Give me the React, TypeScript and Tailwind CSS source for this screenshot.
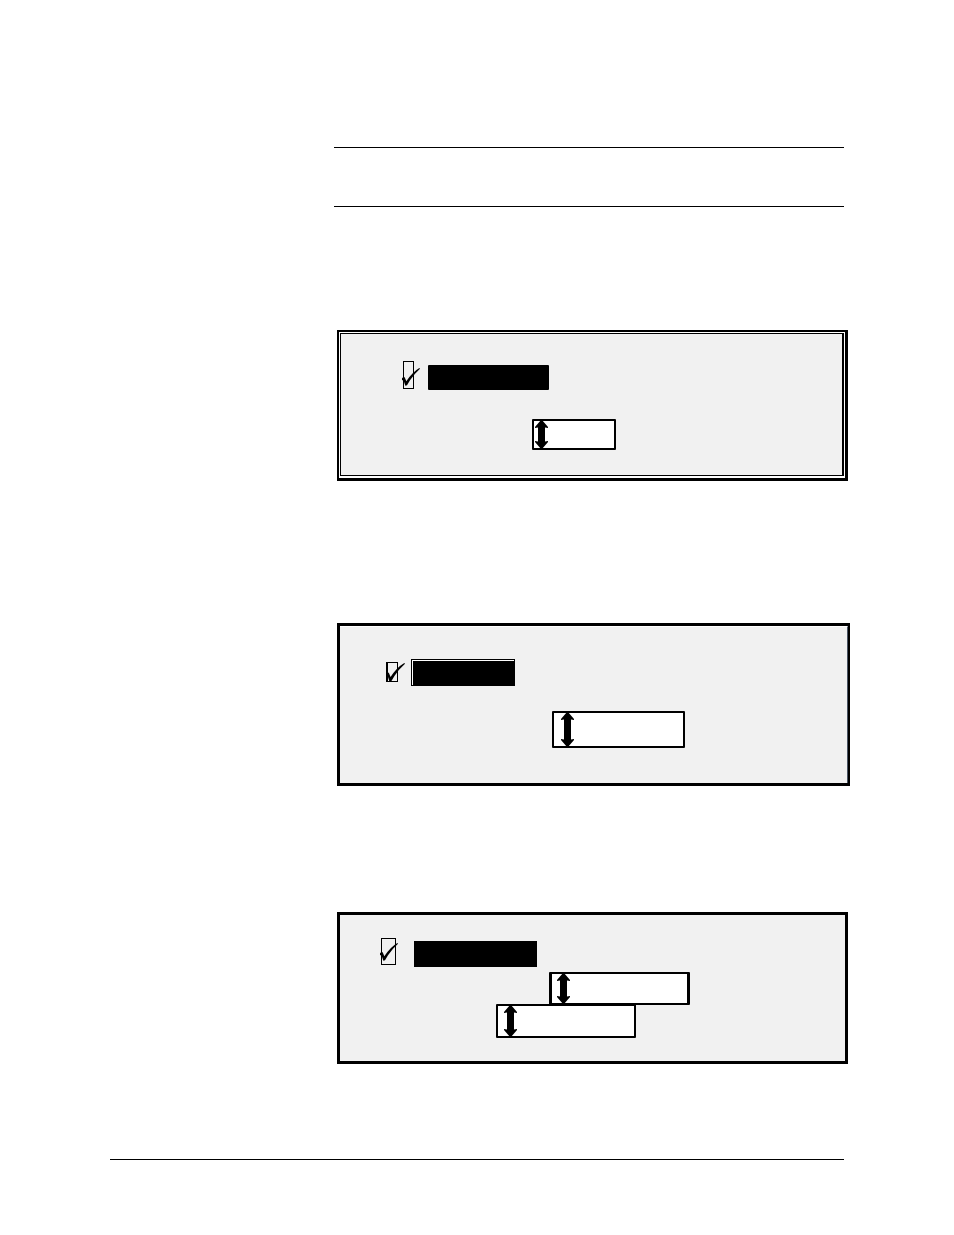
import React, { useState } from "react";
import clsx from "clsx";

type CheckProps = {
  label: string;
  className: string;
  markClassName: string;
};

function Check({ label, className, markClassName }: CheckProps) {
  const [checked, setChecked] = useState(true);

  return (
    <div className={clsx("relative shrink-0", className)}>
      <input
        type="checkbox"
        aria-label={label}
        checked={checked}
        onChange={(e) => setChecked(e.target.checked)}
        className="block h-full w-full appearance-none"
      />
      {checked && (
        // The tick is wider than its box
        <svg
          viewBox="0 0 54 54"
          aria-hidden="true"
          className={clsx("pointer-events-none absolute", markClassName)}
        >
          <path d="M0 31 L4 27 L8 28 L13 40 Q30 13 52 0 L54 2 Q36 18 24 37 L15 52 L10 53 L5 38 L0 36 Z" />
        </svg>
      )}
    </div>
  );
}

type SpinnerProps = {
  label: string;
  height: number;
  className: string;
};

function Spinner({ label, height, className }: SpinnerProps) {
  const [value, setValue] = useState("");

  return (
    <div className={clsx("flex items-center border-black bg-white", className)}>
      <svg
        viewBox={`0 0 13 ${height}`}
        width={13}
        height={height}
        aria-hidden="true"
        className="-my-px shrink-0"
      >
        <path
          d={`M6 0 H7 L13 7 V8 L10 7.5 V${height - 7.5} L13 ${height - 8} V${height - 7} L7 ${height} H6 L0 ${height - 7} V${height - 8} L3 ${height - 7.5} V7.5 L0 8 V7 Z`}
        />
      </svg>
      <input
        type="text"
        aria-label={label}
        value={value}
        onChange={(e) => setValue(e.target.value)}
        className="h-full min-w-0 flex-1 bg-transparent px-2 text-sm outline-none"
      />
    </div>
  );
}

export default function App() {
  return (
    <div className="min-h-screen bg-white px-[110px] pt-[147px] pb-[75px] font-['Liberation_Sans',sans-serif] text-black">
      <main className="ml-[224px]">
        <header className="h-[60px] border-y border-black" />

        <section className="mt-[123px] ml-[3px] -mr-1 border-2 border-r-3 border-b-3 border-black bg-white p-px pb-0.5">
          <div className="border border-r-2 border-black bg-[#f1f1f1] pt-[27px] pb-[25px]">
            <div className="flex items-start gap-3.5 pl-[62px]">
              <Check
                label="First option"
                className="h-7 w-[11px] border border-black"
                markClassName="top-1.5 -left-0.5 h-[18px] w-[18px]"
              />
              <button
                type="button"
                aria-label="First option"
                className="mt-1 h-[25px] w-[121px] rounded-[1px] bg-black"
              />
            </div>
            <Spinner
              label="First value"
              height={29}
              className="mt-[29px] ml-[191px] h-[31px] w-[84px] rounded-[1px] border-2 pl-px"
            />
          </div>
        </section>

        <section className="mt-[142px] ml-[3px] -mr-1.5 border-3 border-r-2 border-black">
          <div className="border-t border-r border-t-white border-r-gray-600 bg-[#f1f1f1] pt-8 pb-[35px]">
            <div className="flex items-start gap-[13px] pl-[46px]">
              <Check
                label="Second option"
                className="mt-[3px] h-5 w-3 border border-l-2 border-black"
                markClassName="top-0 -left-0.5 h-[19px] w-[19px]"
              />
              <button
                type="button"
                aria-label="Second option"
                className="h-[27px] w-[104px] border border-black bg-white pt-px pl-px"
              >
                <span className="block h-full w-full bg-black" />
              </button>
            </div>
            <Spinner
              label="Second value"
              height={35}
              className="mt-[25px] ml-[212px] h-[37px] w-[133px] rounded-[1px] border-2 pl-[7px]"
            />
          </div>
        </section>

        <section className="mt-[126px] ml-[3px] -mr-1 border-3 border-black bg-[#f1f1f1] pt-[23px] pb-[23px]">
          <div className="flex items-start gap-[18px] pl-[41px]">
            <Check
              label="Third option"
              className="h-[27px] w-[15px] border border-black"
              markClassName="top-1 -left-0.5 h-[18px] w-[18px]"
            />
            <button
              type="button"
              aria-label="Third option"
              className="mt-[3px] h-[26px] w-[123px] bg-black"
            />
          </div>
          <Spinner
            label="Third value"
            height={31}
            className="mt-[5px] ml-[209px] h-[33px] w-[141px] rounded-[1px] border-x-3 border-y-2 pl-[5px]"
          />
          <Spinner
            label="Fourth value"
            height={32}
            className="-mt-px ml-[156px] h-[34px] w-[140px] rounded-[1px] border-2 pl-1.5"
          />
        </section>
      </main>

      <footer className="mt-[95px] border-t border-black" />
    </div>
  );
}
